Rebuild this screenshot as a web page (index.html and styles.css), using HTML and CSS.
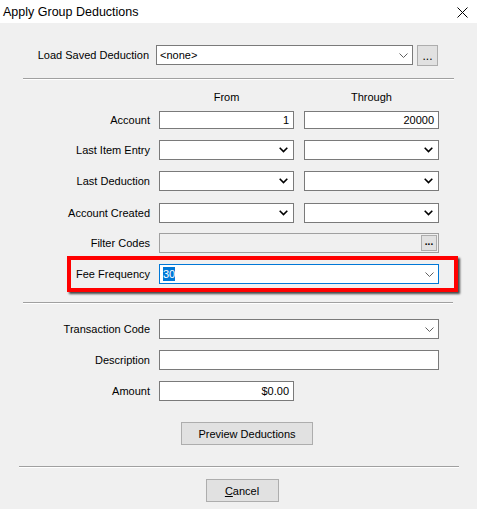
FILE: index.html
```html
<!DOCTYPE html>
<html lang="en">
<head>
    <meta charset="UTF-8">
    <meta name="viewport" content="width=device-width, initial-scale=1.0">
    <title>Apply Group Deductions</title>
    <link rel="stylesheet" href="styles.css">
</head>
<body>
    <div class="titlebar">
        <span class="title">Apply Group Deductions</span>
        <svg class="close" width="11" height="11" viewBox="0 0 11 11">
            <path d="M0.5 0.5 L10.5 10.5 M10.5 0.5 L0.5 10.5" stroke="#000" stroke-width="1" fill="none"/>
        </svg>
    </div>

    <div class="dialog">
        <div class="row load-row">
            <label class="lbl lbl-load">Load Saved Deduction</label>
            <div class="combo combo-load">
                <span class="combo-text">&lt;none&gt;</span>
                <svg class="chev" width="9" height="5" viewBox="0 0 9 5"><polyline points="0.5,0.5 4.5,4.5 8.5,0.5" stroke="#606060" fill="none"/></svg>
            </div>
            <button class="btn-dots">...</button>
        </div>

        <div class="sep sep-top"></div>

        <div class="row head-row">
            <span class="lbl"></span>
            <span class="col-head">From</span>
            <span class="col-head col-gap">Through</span>
        </div>

        <div class="row text-row">
            <label class="lbl">Account</label>
            <div class="textbox half num">1</div>
            <div class="textbox half num col-gap">20000</div>
        </div>

        <div class="row row-11">
            <label class="lbl">Last Item Entry</label>
            <div class="picker half"><svg class="chev-bold" width="9" height="6" viewBox="0 0 9 6"><polyline points="0.7,0.8 4.5,4.6 8.3,0.8" stroke="#000" stroke-width="1.6" fill="none"/></svg></div>
            <div class="picker half col-gap"><svg class="chev-bold" width="9" height="6" viewBox="0 0 9 6"><polyline points="0.7,0.8 4.5,4.6 8.3,0.8" stroke="#000" stroke-width="1.6" fill="none"/></svg></div>
        </div>

        <div class="row row-11">
            <label class="lbl">Last Deduction</label>
            <div class="picker half"><svg class="chev-bold" width="9" height="6" viewBox="0 0 9 6"><polyline points="0.7,0.8 4.5,4.6 8.3,0.8" stroke="#000" stroke-width="1.6" fill="none"/></svg></div>
            <div class="picker half col-gap"><svg class="chev-bold" width="9" height="6" viewBox="0 0 9 6"><polyline points="0.7,0.8 4.5,4.6 8.3,0.8" stroke="#000" stroke-width="1.6" fill="none"/></svg></div>
        </div>

        <div class="row row-12">
            <label class="lbl">Account Created</label>
            <div class="picker half"><svg class="chev-bold" width="9" height="6" viewBox="0 0 9 6"><polyline points="0.7,0.8 4.5,4.6 8.3,0.8" stroke="#000" stroke-width="1.6" fill="none"/></svg></div>
            <div class="picker half col-gap"><svg class="chev-bold" width="9" height="6" viewBox="0 0 9 6"><polyline points="0.7,0.8 4.5,4.6 8.3,0.8" stroke="#000" stroke-width="1.6" fill="none"/></svg></div>
        </div>

        <div class="row row-10">
            <label class="lbl">Filter Codes</label>
            <div class="filter full">
                <button class="btn-dots-small">...</button>
            </div>
        </div>

        <div class="highlight">
            <div class="row">
                <label class="lbl lbl-hl">Fee Frequency</label>
                <div class="combo combo-focus full">
                    <span class="combo-text"><span class="selected">30</span></span>
                    <svg class="chev" width="9" height="5" viewBox="0 0 9 5"><polyline points="0.5,0.5 4.5,4.5 8.5,0.5" stroke="#606060" fill="none"/></svg>
                </div>
            </div>
        </div>

        <div class="sep sep-mid"></div>

        <div class="row row-15">
            <label class="lbl">Transaction Code</label>
            <div class="combo full">
                <span class="combo-text"></span>
                <svg class="chev" width="9" height="5" viewBox="0 0 9 5"><polyline points="0.5,0.5 4.5,4.5 8.5,0.5" stroke="#606060" fill="none"/></svg>
            </div>
        </div>

        <div class="row row-11">
            <label class="lbl">Description</label>
            <div class="textbox full tall"></div>
        </div>

        <div class="row row-11">
            <label class="lbl">Amount</label>
            <div class="textbox half tall num">$0.00</div>
        </div>

        <div class="center-row preview-row">
            <button class="btn btn-preview">Preview Deductions</button>
        </div>

        <div class="sep sep-bottom"></div>

        <div class="center-row cancel-row">
            <button class="btn btn-cancel"><u>C</u>ancel</button>
        </div>
    </div>
</body>
</html>
```

FILE: styles.css
```css
body {
    margin: 0;
    width: 477px;
    height: 509px;
    font-family: "Liberation Sans", Arial, sans-serif;
    font-size: 11px;
    color: #000;
    background: #f0f0f0;
    overflow: hidden;
}
.titlebar {
    height: 23px;
    background: #fff;
    display: flex;
    align-items: center;
    justify-content: space-between;
    padding: 0 9px 0 3px;
}
.title {
    font-size: 12.5px;
    line-height: 16px;
    margin-top: 1px;
}
.close {
    margin-top: 2px;
}
.dialog {
    height: 486px;
    padding-top: 22px;
    box-sizing: border-box;
    background: #f0f0f0;
}
.row {
    display: flex;
    align-items: center;
    height: 20px;
}
.row-10 { margin-top: 10px; }
.row-11 { margin-top: 11px; }
.row-12 { margin-top: 12px; }
.row-15 { margin-top: 15px; }
.lbl {
    width: 159px;
    flex-shrink: 0;
    box-sizing: border-box;
    padding-right: 9px;
    text-align: right;
    white-space: nowrap;
    line-height: 16px;
}
.lbl-load {
    width: 156px;
    padding-right: 7px;
}
.lbl-hl {
    width: 88px;
}
.half { width: 135px; }
.full { width: 280px; }
.col-gap { margin-left: 10px; }
.combo, .picker, .textbox, .filter {
    box-sizing: border-box;
    height: 20px;
    border: 1px solid #7a7a7a;
    background: #fff;
    display: flex;
    align-items: center;
    position: relative;
}
.combo-load {
    width: 257px;
}
.combo-text {
    flex: 1;
    padding-left: 3px;
    line-height: 16px;
    white-space: nowrap;
}
.chev {
    margin-right: 4px;
}
.picker {
    justify-content: flex-end;
}
.chev-bold {
    margin-right: 5px;
}
.btn-dots {
    box-sizing: border-box;
    width: 21px;
    height: 21px;
    margin-left: 4px;
    background: #e1e1e1;
    border: 1px solid #adadad;
    font-family: inherit;
    font-size: 12px;
    line-height: 12px;
    padding: 0 0 3px;
    display: flex;
    align-items: flex-end;
    justify-content: center;
}
.sep {
    height: 0;
    border-top: 1px solid #a0a0a0;
    border-bottom: 1px solid #fff;
}
.sep-top {
    margin: 13px 23px 0 23px;
    width: 431px;
}
.sep-mid {
    margin: 10px 0 0 23px;
    width: 430px;
}
.sep-bottom {
    margin: 21px 0 0 19px;
    width: 440px;
}
.head-row {
    margin-top: 9px;
    height: 16px;
}
.col-head {
    width: 135px;
    text-align: center;
    line-height: 16px;
}
.text-row {
    margin-top: 6px;
    height: 18px;
}
.textbox {
    height: 18px;
    justify-content: flex-end;
    padding-right: 4px;
    line-height: 16px;
}
.textbox.tall {
    height: 20px;
}
.filter {
    background: #f0f0f0;
    border-color: #a0a0a0;
    justify-content: flex-end;
    padding-right: 1px;
}
.btn-dots-small {
    box-sizing: border-box;
    width: 16px;
    height: 16px;
    background: #e1e1e1;
    border: 1px solid #adadad;
    font-family: inherit;
    font-size: 10px;
    font-weight: bold;
    line-height: 10px;
    padding: 0 0 2px;
    display: flex;
    align-items: center;
    justify-content: center;
}
.highlight {
    margin: 3px 0 0 67px;
    width: 391px;
    height: 36px;
    box-sizing: border-box;
    border: 4px solid #f00;
    padding: 4px 0;
    box-shadow: 2px 2px 2px rgba(0, 0, 0, 0.7);
}
.combo-focus {
    border-color: #0078d7;
}
.selected {
    background: #0078d7;
    color: #fff;
    padding: 1px 0;
}
.center-row {
    display: flex;
    justify-content: center;
}
.preview-row {
    margin-top: 21px;
    padding-left: 17px;
}
.cancel-row {
    margin-top: 11px;
    padding-left: 7px;
}
.btn {
    box-sizing: border-box;
    background: #e1e1e1;
    border: 1px solid #adadad;
    font-family: inherit;
    font-size: 11px;
    color: #000;
    padding: 0;
}
.btn-preview {
    width: 132px;
    height: 23px;
}
.btn-cancel {
    width: 73px;
    height: 23px;
}
```
